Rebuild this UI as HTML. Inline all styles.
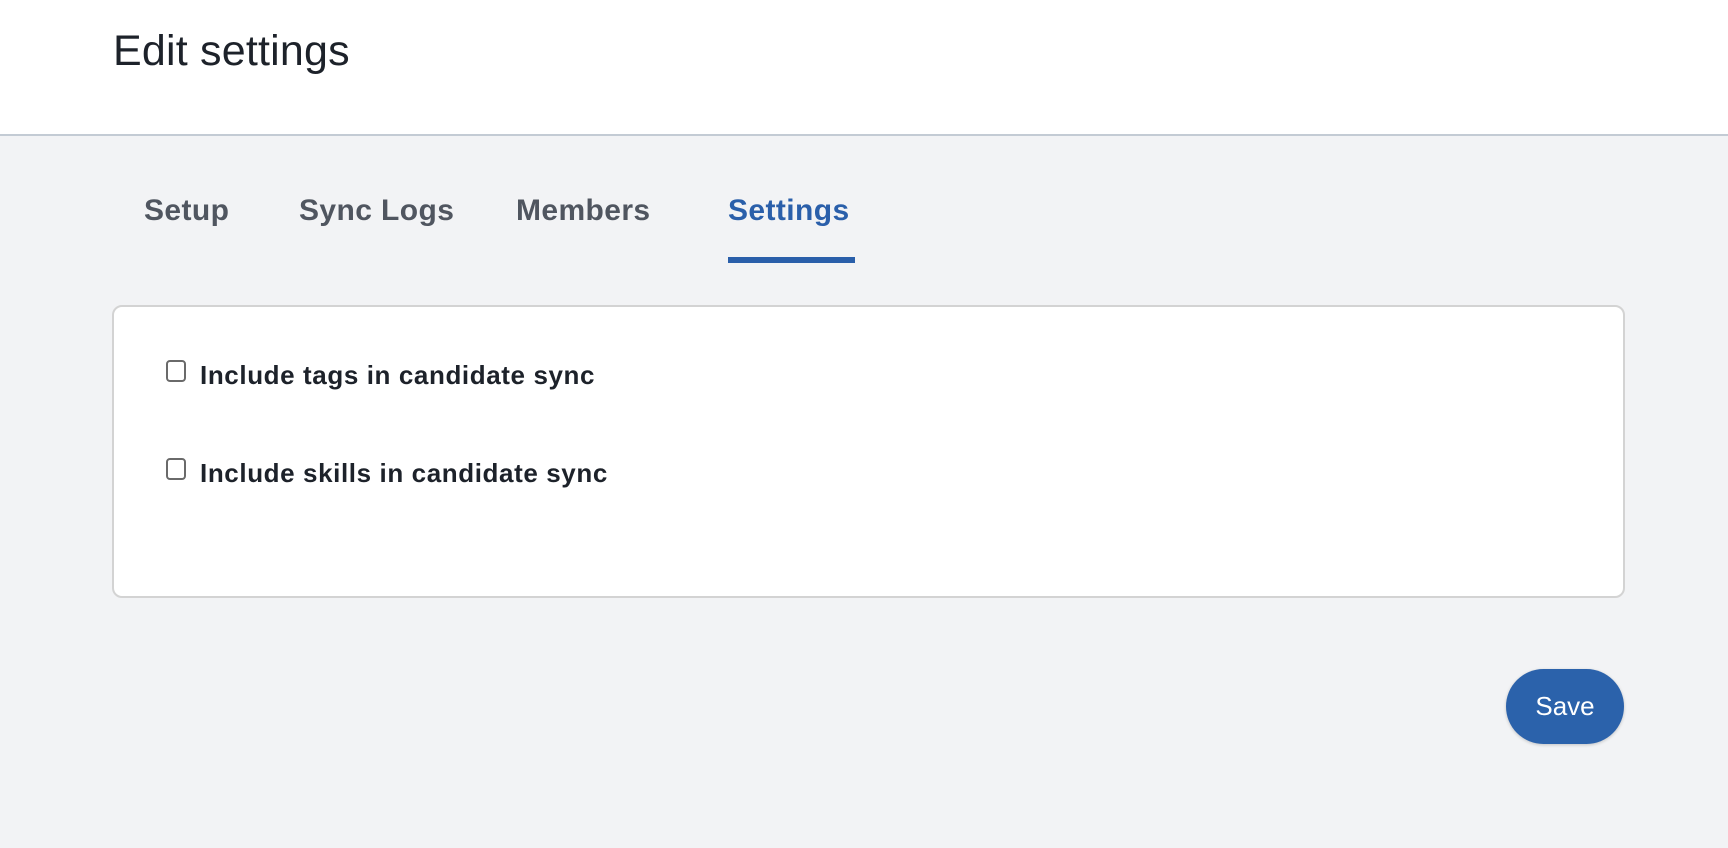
<!DOCTYPE html>
<html><head><meta charset="utf-8"><style>
html,body{margin:0;padding:0;width:1728px;height:848px;background:#f2f3f5;font-family:"Liberation Sans",sans-serif;overflow:hidden}
.hdr{position:absolute;left:0;top:0;width:1728px;height:134px;background:#fff;border-bottom:2px solid #c3cbd4}
.title{position:absolute;left:113px;top:27px;font-size:43px;color:#1d222a;letter-spacing:0.2px}
.tab{position:absolute;top:194px;font-size:30px;font-weight:bold;color:#505660;letter-spacing:0.4px}
.ul{position:absolute;left:728px;top:257px;width:127px;height:6px;background:#2a5faa}
.card{position:absolute;left:112px;top:305px;width:1509px;height:289px;background:#fff;border:2px solid #d3d3d3;border-radius:10px}
.cb{position:absolute;width:20px;height:22px;border:2px solid #6a6a6a;border-radius:4px;background:#fff;box-sizing:border-box}
.lbl{position:absolute;font-size:26px;font-weight:bold;color:#1d222a;letter-spacing:0.6px}
.save{position:absolute;left:1506px;top:669px;width:118px;height:75px;border-radius:38px;background:#2b62ab;color:#fff;font-size:26px;text-align:center;line-height:75px;box-shadow:0 1px 3px rgba(0,0,0,.2)}
</style></head><body>
<div class="hdr"><div class="title">Edit settings</div></div>
<div class="tab" style="left:144px">Setup</div>
<div class="tab" style="left:299px">Sync Logs</div>
<div class="tab" style="left:516px">Members</div>
<div class="tab" style="left:728px;color:#2a5faa">Settings</div>
<div class="ul"></div>
<div class="card"></div>
<div class="cb" style="left:166px;top:360px"></div>
<div class="lbl" style="left:200px;top:360px">Include tags in candidate sync</div>
<div class="cb" style="left:166px;top:458px"></div>
<div class="lbl" style="left:200px;top:458px">Include skills in candidate sync</div>
<div class="save">Save</div>
</body></html>
